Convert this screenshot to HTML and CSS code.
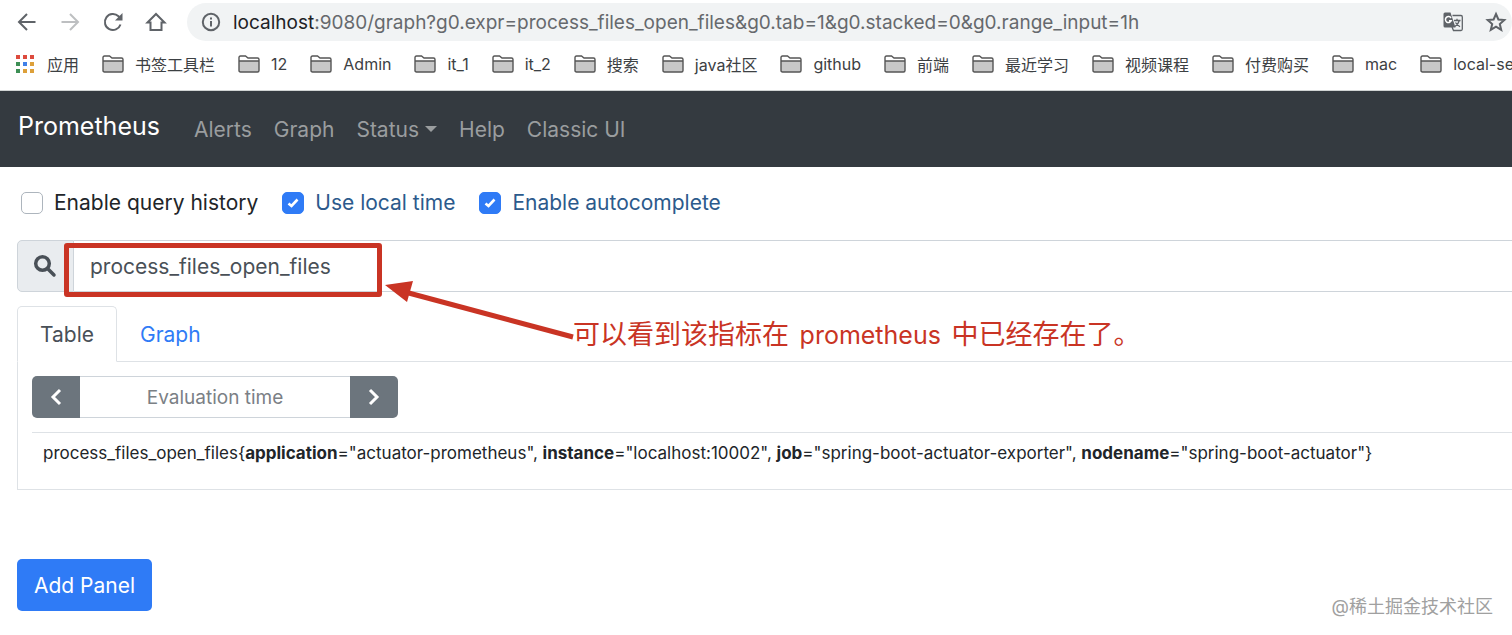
FILE: index.html
```html
<!DOCTYPE html>
<html lang="zh-CN">
	<head>
		<meta charset="UTF-8" />
		<meta name="viewport" content="width=device-width, initial-scale=1.0" />
		<title>Prometheus Time Series Collection and Processing Server</title>
		<link rel="stylesheet" href="styles.css">
	</head>
	<body>
		<svg class="sprite" aria-hidden="true">
			<symbol id="folder" viewBox="0 0 22 18">
				<path d="M1 15.500V2.500Q1 1 2.500 1H7.500L10 3H19.500Q21 3 21 4.500V15.500Q21 17 19.500 17H2.500Q1 17 1 15.500Z" fill="#fff" />
				<path d="M1 6H21V17H1Z" fill="#c8c8c8" />
				<path d="M1 15.500V2.500Q1 1 2.500 1H7.500L10 3H19.500Q21 3 21 4.500V15.500Q21 17 19.500 17H2.500Q1 17 1 15.500ZM1 6H21" fill="none" stroke="#555" stroke-width="1.4" />
			</symbol>
		</svg>

		<!-- 浏览器工具栏 -->
		<div class="toolbar">
			<button class="tool-btn" aria-label="后退">
				<svg width="20" height="20" viewBox="0 0 20 20"><path d="M18.500 10H2.500M10 2L2 10L10 18" /></svg>
			</button>
			<button class="tool-btn disabled" aria-label="前进">
				<svg width="20" height="20" viewBox="0 0 20 20"><path d="M1.500 10H17.500M10 2L18 10L10 18" /></svg>
			</button>
			<button class="tool-btn" aria-label="刷新">
				<svg width="20" height="20" viewBox="0 0 20 20"><path d="M17.500 12.500A8 8 0 1 1 15.500 4.300L17 6" /><path class="solid" d="M19.500 1V8.500H12Z" /></svg>
			</button>
			<button class="tool-btn" aria-label="主页">
				<svg width="20" height="20" viewBox="0 0 20 20"><path d="M1.500 10.500L10 2L18.500 10.500H15.500V18H4.500V10.500Z" /></svg>
			</button>
			<div class="address">
				<svg class="info" width="20" height="20" viewBox="0 0 20 20"><circle cx="10" cy="10" r="8.200" /><path d="M10 9V14.500M10 5.500V7.500" /></svg>
				<div class="url" role="textbox" aria-label="地址" contenteditable="true" spellcheck="false"><span class="host">localhost</span>:9080/graph?g0.expr=process_files_open_files&amp;g0.tab=1&amp;g0.stacked=0&amp;g0.range_input=1h</div>
				<button class="tool-btn" aria-label="翻译">
					<svg width="20" height="20" viewBox="0 0 20 20">
						<path class="thin" d="M9.500 3.500H18Q19.300 3.500 19.300 5V17Q19.300 18.500 18 18.500H10.500L9 15" />
						<path class="solid" d="M2 .5H7.500L12.500 15.500H2Q.5 15.500 .5 14V2Q.5 .5 2 .5Z" />
						<path class="mark" d="M8 6A3 3 0 1 0 8.200 8.800H6" />
						<path class="thin" d="M11 8.500H17.500M14 6.800V8.500M16.300 8.500Q15.500 12 12 14.500M12.500 10.500Q14 13 17 14.800" />
					</svg>
				</button>
				<button class="tool-btn" aria-label="收藏">
					<svg width="20" height="20" viewBox="0 0 20 20"><path d="M10 2L12.400 7.500L18.300 8L13.800 12L15.200 17.800L10 14.700L4.800 17.800L6.200 12L1.700 8L7.600 7.500Z" /></svg>
				</button>
			</div>
		</div>

		<!-- 书签栏 -->
		<div class="bookmarks">
			<a href="#" class="apps">
				<svg width="18" height="18" viewBox="0 0 18 18">
					<path fill="#dd4b3e" d="M0 0h4v4H0zM7 0h4v4H7zM14 0h4v4h-4z" />
					<path fill="#3d8f55" d="M0 7h4v4H0zM0 14h4v4H0z" />
					<path fill="#4080e8" d="M7 7h4v4H7z" />
					<path fill="#dda03a" d="M14 7h4v4h-4zM7 14h4v4H7zM14 14h4v4h-4z" />
				</svg>应用</a>
			<a href="#"><svg width="22" height="18"><use href="#folder" /></svg>书签工具栏</a>
			<a href="#"><svg width="22" height="18"><use href="#folder" /></svg>12</a>
			<a href="#"><svg width="22" height="18"><use href="#folder" /></svg>Admin</a>
			<a href="#"><svg width="22" height="18"><use href="#folder" /></svg>it_1</a>
			<a href="#"><svg width="22" height="18"><use href="#folder" /></svg>it_2</a>
			<a href="#"><svg width="22" height="18"><use href="#folder" /></svg>搜索</a>
			<a href="#"><svg width="22" height="18"><use href="#folder" /></svg>java社区</a>
			<a href="#"><svg width="22" height="18"><use href="#folder" /></svg>github</a>
			<a href="#"><svg width="22" height="18"><use href="#folder" /></svg>前端</a>
			<a href="#"><svg width="22" height="18"><use href="#folder" /></svg>最近学习</a>
			<a href="#"><svg width="22" height="18"><use href="#folder" /></svg>视频课程</a>
			<a href="#"><svg width="22" height="18"><use href="#folder" /></svg>付费购买</a>
			<a href="#"><svg width="22" height="18"><use href="#folder" /></svg>mac</a>
			<a href="#"><svg width="22" height="18"><use href="#folder" /></svg>local-se</a>
		</div>

		<nav class="navbar">
			<a href="#" class="brand">Prometheus</a>
			<a href="#" class="nav-link">Alerts</a>
			<a href="#" class="nav-link">Graph</a>
			<a href="#" class="nav-link dropdown">Status</a>
			<a href="#" class="nav-link">Help</a>
			<a href="#" class="nav-link">Classic UI</a>
		</nav>

		<main class="content">
			<div class="options">
				<label><input type="checkbox" />Enable query history</label>
				<label><input type="checkbox" checked /><span>Use local time</span></label>
				<label><input type="checkbox" checked /><span>Enable autocomplete</span></label>
			</div>

			<div class="query">
				<label class="query-icon" for="expr" aria-label="Expression">
					<svg width="22" height="22" viewBox="0 0 22 22"><circle cx="8.500" cy="8.500" r="6.800" /><path d="M13.500 13.500L20 20" /></svg>
				</label>
				<input type="text" id="expr" value="process_files_open_files" spellcheck="false" />
				<div class="highlight"></div>
				<svg class="arrow" width="190" height="60" viewBox="0 0 190 60">
					<path d="M188 53L20 8" stroke="#c93424" stroke-width="5" />
					<path d="M0 1L28 -3L22 18Z" fill="#c93424" />
				</svg>
				<div class="note">可以看到该指标在 <span>prometheus</span> 中已经存在了。</div>
			</div>

			<div class="tabs">
				<button class="tab active">Table</button>
				<button class="tab">Graph</button>
			</div>
			<div class="pane">
				<div class="time-picker">
					<button aria-label="Decrease time"><svg width="12" height="18" viewBox="0 0 12 18"><path d="M10 2L3 9L10 16" /></svg></button>
					<input type="text" placeholder="Evaluation time" aria-label="Evaluation time" />
					<button aria-label="Increase time"><svg width="12" height="18" viewBox="0 0 12 18"><path d="M2 2L9 9L2 16" /></svg></button>
				</div>
				<table class="result">
					<tr>
						<td>process_files_open_files{<b>application</b>="actuator-prometheus", <b>instance</b>="localhost:10002", <b>job</b>="spring-boot-actuator-exporter", <b>nodename</b>="spring-boot-actuator"}</td>
					</tr>
				</table>
			</div>

			<button class="add-panel">Add Panel</button>
		</main>

		<div class="watermark">@稀土掘金技术社区</div>
	</body>
</html>
```
FILE: styles.css
```css
* {
	box-sizing: border-box;
}

body {
	position: relative;
	min-height: 100vh;
	margin: 0;
	overflow: hidden;
	font-family: Inter, "Noto Sans CJK SC", sans-serif;
	font-size: 21px;
	color: #212529;
	background: white;
}

button,
input {
	margin: 0;
	font: inherit;
}

a {
	text-decoration: none;
}

svg {
	flex: none;
	overflow: visible;
}

.sprite {
	position: absolute;
	width: 0;
	height: 0;
}

/* 浏览器工具栏 */
.toolbar {
	display: flex;
	align-items: center;
	gap: 23px;
	height: 44px;
	padding-left: 17px;
}

.tool-btn {
	display: flex;
	padding: 0;
	border: none;
	background: none;
	color: #5f6368;
}

.tool-btn.disabled {
	color: #bdbfc1;
}

.tool-btn path,
.info {
	fill: none;
	stroke: currentColor;
	stroke-width: 2;
}

.tool-btn .solid {
	fill: currentColor;
	stroke: none;
}

.tool-btn .thin {
	stroke-width: 1.3;
}

.tool-btn .mark {
	stroke: white;
	stroke-width: 1.5;
}

.address {
	display: flex;
	flex: 1;
	align-items: center;
	gap: 12px;
	height: 38px;
	margin-left: -2px;
	padding: 0 6px 0 14px;
	border-radius: 19px;
	background: #f1f3f4;
	color: #5f6368;
}

.address .tool-btn {
	margin-left: 11px;
}

.url {
	flex: 1;
	font-size: 19px;
	white-space: nowrap;
	color: #66696d;
}

.host {
	color: #202124;
}

/* 书签栏 */
.bookmarks {
	display: flex;
	align-items: center;
	gap: 23px;
	height: 47px;
	padding: 0 0 6px 16px;
	border-bottom: 1px solid #d0d4d4;
	overflow: hidden;
}

.bookmarks a {
	display: flex;
	align-items: center;
	gap: 11px;
	font-size: 16px;
	white-space: nowrap;
	color: #3c4043;
}

.bookmarks .apps {
	gap: 13px;
}

/* 导航栏 */
.navbar {
	display: flex;
	align-items: center;
	gap: 22px;
	height: 76px;
	padding-left: 18px;
	background: #343a40;
}

.brand {
	margin-right: 12px;
	padding-bottom: 6px;
	font-size: 25px;
	color: white;
}

.nav-link {
	color: #9a9d9f;
}

.dropdown::after {
	content: "";
	display: inline-block;
	margin-left: 6px;
	vertical-align: 5px;
	border: 6px solid transparent;
	border-top-color: currentColor;
	border-bottom: none;
}

/* 内容区 */
.content {
	padding-left: 17px;
}

.options {
	display: flex;
	gap: 24px;
	height: 71px;
	margin-bottom: 2px;
	padding-left: 4px;
}

.options label {
	display: flex;
	align-items: center;
	gap: 11px;
}

.options input {
	appearance: none;
	width: 22px;
	height: 22px;
	border: 1px solid #adb5bd;
	border-radius: 5px;
}

.options input:checked {
	border-color: #2f7bf6;
	background: #2f7bf6 url("data:image/svg+xml,%3Csvg xmlns='http://www.w3.org/2000/svg' viewBox='0 0 20 20'%3E%3Cpath d='M5.500 10.500L8.500 13L14.500 6.500' fill='none' stroke='white' stroke-width='2.600'/%3E%3C/svg%3E");
}

.options input:checked + span {
	color: #2c5a8c;
}

.query {
	position: relative;
	display: flex;
	height: 52px;
}

.query-icon {
	display: flex;
	align-items: center;
	width: 57px;
	padding-left: 16px;
	border: 1px solid #ced4da;
	border-radius: 5px 0 0 5px;
	background: #e9ecef;
}

.query-icon svg {
	fill: none;
	stroke: #495057;
	stroke-width: 3.5;
	stroke-linecap: round;
}

.query > input {
	flex: 1;
	padding: 0 16px;
	border: 1px solid #ced4da;
	border-width: 1px 0;
	color: #495057;
}

/* 标注 */
.highlight {
	position: absolute;
	left: 47px;
	top: 3px;
	width: 318px;
	height: 54px;
	border: 5px solid #c93424;
	border-radius: 3px;
}

.arrow {
	position: absolute;
	left: 368px;
	top: 44px;
}

.note {
	position: absolute;
	left: 556px;
	top: 75px;
	font-size: 27px;
	line-height: 40px;
	white-space: nowrap;
	color: #c93424;
}

.note span {
	margin: 0 3px;
	font-size: 25px;
}

.tabs {
	display: flex;
	height: 56px;
	margin-top: 14px;
	border-bottom: 1px solid #dee2e6;
}

.tab {
	height: 56px;
	padding: 0 22px;
	border: 1px solid transparent;
	background: none;
	color: #2f7bf6;
}

.tab.active {
	border-color: #dee2e6;
	border-bottom-color: white;
	border-radius: 5px 5px 0 0;
	background: white;
	color: #495057;
}

.pane {
	padding: 14px 0 14px 14px;
	border: 1px solid #dee2e6;
	border-width: 0 0 1px 1px;
}

.time-picker {
	display: flex;
	width: 366px;
	height: 42px;
}

.time-picker button {
	display: flex;
	align-items: center;
	justify-content: center;
	width: 48px;
	border: none;
	border-radius: 5px 0 0 5px;
	background: #6c757d;
}

.time-picker button:last-child {
	border-radius: 0 5px 5px 0;
}

.time-picker path {
	fill: none;
	stroke: white;
	stroke-width: 3;
}

.time-picker input {
	flex: 1;
	min-width: 0;
	border: 1px solid #ced4da;
	border-width: 1px 0;
	font-size: 19px;
	text-align: center;
}

.time-picker input::placeholder {
	color: #7b8085;
}

.result {
	width: 100%;
	margin-top: 14px;
	border-collapse: collapse;
	border-top: 1px solid #dee2e6;
}

.result td {
	padding: 7px 11px 9px;
	font-size: 17px;
	line-height: 26px;
	white-space: nowrap;
}

.add-panel {
	height: 52px;
	margin-top: 69px;
	padding: 0 17px;
	border: none;
	border-radius: 5px;
	background: #2f7bf6;
	color: white;
}

.watermark {
	position: absolute;
	right: 19px;
	bottom: 17px;
	font-size: 18px;
	color: #a0a0a0;
}
```
